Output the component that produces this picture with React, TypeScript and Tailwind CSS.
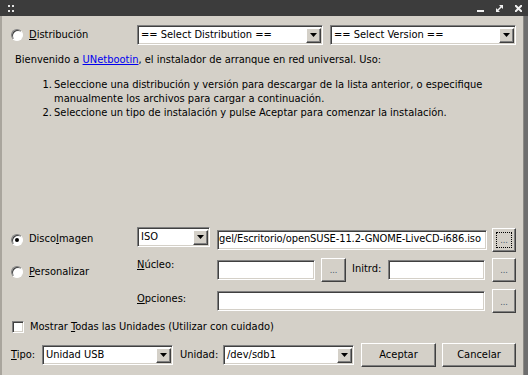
const FONT = "font-['DejaVu_Sans_Condensed','DejaVu_Sans',sans-serif]"

const SUNKEN =
  'border border-t-[#808080] border-l-[#808080] border-b-white border-r-white shadow-[inset_1px_1px_0_#404040,inset_-1px_-1px_0_#d4d0c8]'
const RAISED =
  'border border-t-white border-l-white border-b-[#404040] border-r-[#404040] shadow-[inset_-1px_-1px_0_#808080] bg-[#d4d0c8]'

function Radio({ checked = false }: { checked?: boolean }) {
  return (
    <div className="flex h-[12px] w-[12px] shrink-0 items-center justify-center rounded-full border border-t-[#808080] border-l-[#808080] border-b-white border-r-white bg-white shadow-[inset_1px_1px_0_#404040]">
      {checked && <div className="h-[4px] w-[4px] rounded-full bg-black" />}
    </div>
  )
}

function Arrow() {
  return (
    <div className={`${RAISED} mr-[1px] flex h-[15px] w-[15px] shrink-0 items-center justify-center`}>
      <svg width="7" height="4" viewBox="0 0 7 4">
        <path d="M0 0h7L3.5 4z" fill="#000" />
      </svg>
    </div>
  )
}

function Combo({ className, text }: { className: string; text: string }) {
  return (
    <div className={`${SUNKEN} ${className} flex h-[20px] shrink-0 items-center bg-white`}>
      <span className="flex-1 overflow-hidden whitespace-nowrap pl-[3px]">{text}</span>
      <Arrow />
    </div>
  )
}

function Field({ className, children }: { className: string; children?: React.ReactNode }) {
  return <div className={`${SUNKEN} ${className} flex h-[20px] shrink-0 items-center overflow-hidden bg-white`}>{children}</div>
}

function Dots({ className, focus = false }: { className: string; focus?: boolean }) {
  return (
    <div className={`${RAISED} ${className} flex shrink-0 items-center justify-center p-[3px]`}>
      <div
        className={`flex h-full w-full items-center justify-center pt-[2px] text-[9px] leading-none text-[#44546a] ${
          focus ? 'border border-dotted border-black' : ''
        }`}
      >
        ...
      </div>
    </div>
  )
}

export default function App() {
  return (
    <div className={`${FONT} flex h-[375px] w-[528px] flex-col overflow-hidden bg-[#6e6e6e] text-[11px] text-black`}>
      {/* title bar */}
      <div className="flex h-[16px] shrink-0 items-center bg-[#3c3c3c] pl-[8px] pr-[6px]">
        <svg width="7" height="7" viewBox="0 0 7 7">
          <rect x="0" y="0" width="2" height="2" fill="#e6e6e6" />
          <rect x="4" y="0" width="2" height="2" fill="#e6e6e6" />
          <rect x="0" y="5" width="2" height="2" fill="#e6e6e6" />
          <rect x="4" y="5" width="2" height="2" fill="#e6e6e6" />
        </svg>
        <div className="ml-auto flex items-center gap-[12px]">
          <svg width="7" height="7" viewBox="0 0 7 7">
            <rect x="0" y="5" width="7" height="2" fill="#f0f0f0" />
          </svg>
          <svg width="7" height="7" viewBox="0 0 7 7">
            <path d="M3 0h4v4L5.5 2.5 2 6 1 5 4.5 1.5zM0 3l1.5 1.5L0 6z M0 7V3l4 4z" fill="#f0f0f0" />
          </svg>
          <svg width="7" height="7" viewBox="0 0 7 7">
            <path d="M0 0l7 7M7 0L0 7" stroke="#f0f0f0" strokeWidth="2" />
          </svg>
        </div>
      </div>

      <div className="flex flex-1">
        <div className="flex w-[524px] flex-col border-l-2 border-r border-l-[#a9a59d] border-r-[#8c8a85] bg-[#d4d0c8] pl-[9px]">
          {/* distribution row */}
          <div className="mt-[9px] flex h-[20px] items-center">
            <div className="flex w-[126px] items-center">
              <Radio />
              <span className="ml-[6px]">
                <u>D</u>istribución
              </span>
            </div>
            <Combo className="w-[186px]" text="== Select Distribution ==" />
            <div className="w-[7px]" />
            <Combo className="w-[186px]" text="== Select Version ==" />
          </div>

          <div className="mt-[8px] pl-[4px] leading-[14px]">
            Bienvenido a <span className="text-[#0000ee] underline">UNetbootin</span>, el instalador de arranque en red
            universal. Uso:
          </div>

          <div className="mt-[11px] leading-[14px]">
            <div className="flex">
              <span className="w-[43px] pr-[2px] text-right">1.</span>
              <span>
                Seleccione una distribución y versión para descargar de la lista anterior, o especifique
                <br />
                manualmente los archivos para cargar a continuación.
              </span>
            </div>
            <div className="flex">
              <span className="w-[43px] pr-[2px] text-right">2.</span>
              <span>Seleccione un tipo de instalación y pulse Aceptar para comenzar la instalación.</span>
            </div>
          </div>

          <div className="flex-1" />

          {/* disk image row */}
          <div className="flex h-[25px] items-center">
            <div className="flex w-[126px] items-center">
              <Radio checked />
              <span className="ml-[6px]">
                Disco<u>I</u>magen
              </span>
            </div>
            <Combo className="mb-[5px] w-[73px]" text="ISO" />
            <div className="w-[7px]" />
            <Field className="w-[270px]">
              <span className="whitespace-nowrap pl-[1px] tracking-[-0.1px]">
                gel/Escritorio/openSUSE-11.2-GNOME-LiveCD-i686.iso
              </span>
            </Field>
            <div className="w-[5px]" />
            <Dots className="h-[24px] w-[24px]" focus />
          </div>

          {/* custom row */}
          <div className="mt-[5px] flex h-[25px] items-center">
            <div className="mt-[5px] flex w-[126px] items-center">
              <Radio />
              <span className="ml-[6px]">
                <u>P</u>ersonalizar
              </span>
            </div>
            <span className="mb-[9px] w-[80px]">
              <u>N</u>úcleo:
            </span>
            <Field className="w-[98px]" />
            <div className="w-[6px]" />
            <Dots className="h-[24px] w-[25px]" />
            <span className="w-[42px] pl-[6px]">Initrd:</span>
            <Field className="w-[97px]" />
            <div className="w-[7px]" />
            <Dots className="h-[24px] w-[24px]" />
          </div>

          <div className="mt-[7px] flex h-[24px] items-center">
            <div className="w-[126px]" />
            <span className="mb-[3px] w-[80px]">
              <u>O</u>pciones:
            </span>
            <Field className="w-[268px]" />
            <div className="w-[7px]" />
            <Dots className="h-[24px] w-[24px]" />
          </div>

          {/* show all drives */}
          <div className="mt-[7px] flex h-[14px] items-center">
            <div className={`${SUNKEN} ml-[1px] h-[12px] w-[12px] bg-white`} />
            <span className="ml-[6px] mt-[1px]">
              Mostrar <u>T</u>odas las Unidades (Utilizar con cuidado)
            </span>
          </div>

          {/* bottom row */}
          <div className="mb-[8px] mt-[9px] flex h-[24px] items-center">
            <span className="w-[31px]">
              <u>T</u>ipo:
            </span>
            <Combo className="w-[131px]" text="Unidad USB" />
            <span className="w-[50px] pl-[7px]">Unidad:</span>
            <Combo className="w-[131px]" text="/dev/sdb1" />
            <div className="w-[7px]" />
            <button className={`${RAISED} h-[24px] w-[75px]`}>Aceptar</button>
            <div className="w-[6px]" />
            <button className={`${RAISED} h-[24px] w-[74px]`}>Cancelar</button>
          </div>
        </div>
      </div>
    </div>
  )
}
